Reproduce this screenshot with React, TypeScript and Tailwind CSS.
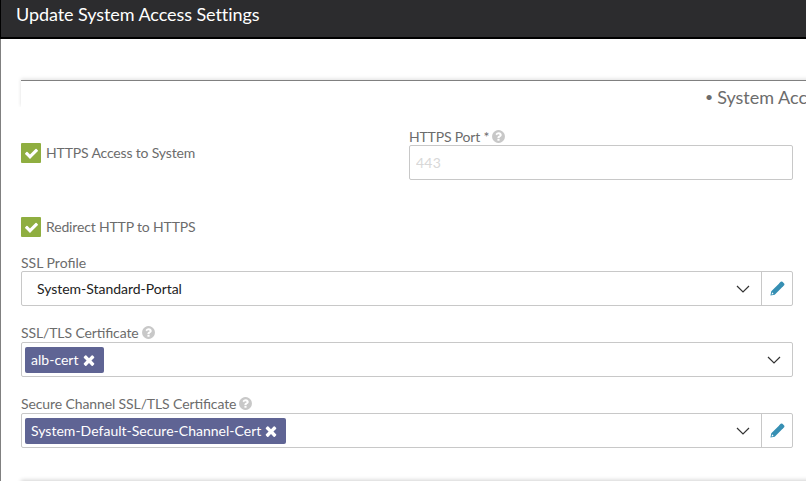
import React from "react";

const CHECK =
  "M1671 566q0 40-28 68l-724 724-136 136q-28 28-68 28t-68-28l-136-136-362-362q-28-28-28-68t28-68l136-136q28-28 68-28t68 28l294 295 656-657q28-28 68-28t68 28l136 136q28 28 28 68z";
const TIMES =
  "M1490 1322q0 40-28 68l-136 136q-28 28-68 28t-68-28l-294-294-294 294q-28 28-68 28t-68-28l-136-136q-28-28-28-68t28-68l294-294-294-294q-28-28-28-68t28-68l136-136q28-28 68-28t68 28l294 294 294-294q28-28 68-28t68 28l136 136q28 28 28 68t-28 68l-294 294 294 294q28 28 28 68z";
const QUESTION =
  "M1024 1376v-192q0-14-9-23t-23-9h-192q-14 0-23 9t-9 23v192q0 14 9 23t23 9h192q14 0 23-9t9-23zm256-672q0-88-55.5-163t-138.5-116-170-41q-243 0-371 213-15 24 8 42l132 100q7 6 19 6 16 0 25-12 53-68 86-92 34-24 86-24 48 0 85.5 26t37.5 59q0 38-20 61t-68 45q-63 28-115.5 86.5t-52.5 125.5v36q0 14 9 23t23 9h192q14 0 23-9t9-23q0-19 21.5-49.5t54.5-49.5q32-18 49-28.5t46-35 44.5-48 28-60.5 12.5-81zm384 192q0 209-103 385.5t-279.5 279.5-385.5 103-385.5-103-279.5-279.5-103-385.5 103-385.5 279.5-279.5 385.5-103 385.5 103 279.5 279.5 103 385.5z";

function Icon({ d, className }: { d: string; className: string }) {
  return (
    <svg viewBox="0 0 1792 1792" className={`shrink-0 fill-current ${className}`}>
      <path d={d} />
    </svg>
  );
}

function Pencil() {
  return (
    <svg viewBox="0 0 14 14" className="size-[15px] fill-[#368fb3]">
      <path fillRule="evenodd" d="M.4 13.6l.8-4L8.8 2l3.2 3.2-7.6 7.6zM1.5 12.5l1.9-.4-1.4-1.6z" />
      <path d="M9.3 1.5l.7-.7q.8-.7 1.6 0l1.6 1.6q.7.8 0 1.6l-.7.7-.8.8L8.4 2.4z" />
    </svg>
  );
}

function Chevron() {
  return (
    <svg viewBox="0 0 14 8" className="mr-[11px] h-2 w-3.5 shrink-0 fill-none stroke-[#333]" strokeWidth="1.2">
      <path d="M1 1l6 6 6-6" />
    </svg>
  );
}

function Checkbox({ label }: { label: string }) {
  return (
    <label className="flex h-5 items-center">
      <span className="flex size-5 items-center justify-center rounded-[1px] bg-[#8fae40]">
        <Icon d={CHECK} className="size-[15px] text-white" />
      </span>
      <span className="ml-[5px] text-sm leading-5 tracking-[-0.16px] whitespace-nowrap">{label}</span>
    </label>
  );
}

function FieldLabel({ text, help, spacing }: { text: string; help?: boolean; spacing: string }) {
  return (
    <div className="flex h-[17px] items-center">
      <span className={`text-sm leading-[17px] whitespace-nowrap [font-feature-settings:'liga'] ${spacing}`}>{text}</span>
      {help && <Icon d={QUESTION} className="ml-0.5 size-[15px] text-[#c8c8c8]" />}
    </div>
  );
}

function SelectBox({ children, editable }: { children: React.ReactNode; editable?: boolean }) {
  return (
    <div className="flex h-[35px] w-[772px] rounded-[2px] border border-[#c8c8c8] bg-white">
      <div className="flex min-w-0 flex-1 items-center justify-between">
        {children}
        <Chevron />
      </div>
      {editable && (
        <button className="flex w-[31px] items-center justify-center border-l border-[#c8c8c8]">
          <Pencil />
        </button>
      )}
    </div>
  );
}

function Tag({ text }: { text: string }) {
  return (
    <span className="ml-[3px] flex h-[26px] items-center rounded-[2px] bg-[#5f6494] pr-[7px] pl-1.5 text-white">
      <span className="text-sm leading-5 tracking-[0.02px] whitespace-nowrap">{text}</span>
      <Icon d={TIMES} className="ml-0.5 size-4" />
    </span>
  );
}

export default function App() {
  return (
    <div className="flex h-[481px] w-[806px] flex-col overflow-hidden bg-white font-['Lato',sans-serif] text-[#6c6c6c]">
      <header className="h-[39px] shrink-0 border-b-2 border-l border-black bg-[#2c2c2e] pt-[3px] pl-[15px]">
        <h1 className="text-lg leading-[23px] tracking-[-0.07px] whitespace-nowrap text-white">Update System Access Settings</h1>
      </header>
      <main className="flex-1 border-l border-[#808080] pt-[41px] pl-5">
        <section className="h-[27px] w-[1548px] border-t border-[#808080] shadow-[0_-1px_4px_rgba(0,0,0,0.13)] [clip-path:inset(-6px_0_0_-3px)]">
          <h2 className="flex pt-1 pl-[684px] text-lg leading-6 whitespace-nowrap">
            <span className="mr-1 text-sm leading-6">•</span>System Access
          </h2>
        </section>
        <div className="mt-[21px] flex h-[52px]">
          <div className="w-[388px] pt-[15px]">
            <Checkbox label="HTTPS Access to System" />
          </div>
          <div className="w-[384px]">
            <FieldLabel text="HTTPS Port *" help spacing="tracking-[-0.18px]" />
            <input
              className="block h-[35px] w-full rounded-[2px] border border-[#c8c8c8] px-1.5 text-sm tracking-[0.2px] outline-none placeholder:text-[#d8d8d8]"
              placeholder="443"
            />
          </div>
        </div>
        <div className="mt-[37px]">
          <Checkbox label="Redirect HTTP to HTTPS" />
        </div>
        <div className="mt-[17px]">
          <FieldLabel text="SSL Profile" spacing="tracking-normal" />
          <SelectBox editable>
            <span className="ml-[15px] text-sm tracking-[-0.03px] whitespace-nowrap text-[#222]">System-Standard-Portal</span>
          </SelectBox>
        </div>
        <div className="mt-[18px] flex flex-col gap-px">
          <FieldLabel text="SSL/TLS Certificate" help spacing="tracking-[-0.12px]" />
          <SelectBox>
            <Tag text="alb-cert" />
          </SelectBox>
        </div>
        <div className="mt-[18px] flex flex-col gap-px">
          <FieldLabel text="Secure Channel SSL/TLS Certificate" help spacing="tracking-[-0.11px]" />
          <SelectBox editable>
            <Tag text="System-Default-Secure-Channel-Cert" />
          </SelectBox>
        </div>
        <section className="mt-[33px] h-10 w-[1548px] border-t border-[#808080] shadow-[0_-1px_4px_rgba(0,0,0,0.18)]" />
      </main>
    </div>
  );
}
